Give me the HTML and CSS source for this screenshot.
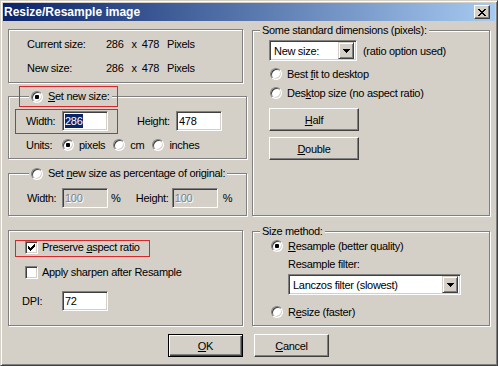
FILE: index.html
```html
<!DOCTYPE html>
<html lang="en">
<head>
    <meta charset="UTF-8">
    <title>Resize/Resample image</title>
    <link rel="stylesheet" href="styles.css">
</head>
<body>
    <div class="window">
        <!-- title bar -->
        <div class="titlebar">
            <span class="title">Resize/Resample image</span>
            <span class="close-btn">
                <svg width="8" height="7" viewBox="0 0 8 7"><path fill="#000" d="M0 0h2v1H0z M6 0h2v1H6z M1 1h2v1H1z M5 1h2v1H5z M2 2h4v1H2z M3 3h2v1H3z M2 4h4v1H2z M1 5h2v1H1z M5 5h2v1H5z M0 6h2v1H0z M6 6h2v1H6z"/></svg>
            </span>
        </div>

        <div class="dialog-body">
            <div class="columns">
                <!-- left column -->
                <div class="col col-left">
                    <fieldset class="group group-info">
                        <div class="info-row">
                            <span class="info-label">Current size:</span>
                            <span class="info-num">286</span><span class="info-x">x</span><span class="info-num">478</span><span>Pixels</span>
                        </div>
                        <div class="info-row">
                            <span class="info-label">New size:</span>
                            <span class="info-num">286</span><span class="info-x">x</span><span class="info-num">478</span><span>Pixels</span>
                        </div>
                    </fieldset>

                    <fieldset class="group group-new">
                        <legend class="legend legend-radio has-mark">
                            <span class="mark mark-legend"></span>
                            <span class="radio checked"></span><span><u>S</u>et new size:</span>
                        </legend>
                        <div class="group-body body-new">
                            <div class="row">
                                <span class="pair has-mark">
                                    <span class="mark mark-width"></span>
                                    <span class="lbl lbl-w">Width:</span>
                                    <span class="field"><span class="sel">286</span></span>
                                </span>
                                <span class="lbl lbl-h">Height:</span>
                                <span class="field">478</span>
                            </div>
                            <div class="row units">
                                <span class="lbl lbl-w">Units:</span>
                                <span class="opt"><span class="radio checked"></span><span>pixels</span></span>
                                <span class="opt"><span class="radio"></span><span>cm</span></span>
                                <span class="opt"><span class="radio"></span><span>inches</span></span>
                            </div>
                        </div>
                    </fieldset>

                    <fieldset class="group group-percent">
                        <legend class="legend legend-radio">
                            <span class="radio"></span><span>Set <u>n</u>ew size as percentage of original:</span>
                        </legend>
                        <div class="group-body body-percent">
                            <div class="row">
                                <span class="lbl lbl-w2">Width:</span>
                                <span class="field disabled">100</span>
                                <span class="pct">%</span>
                                <span class="lbl lbl-h2">Height:</span>
                                <span class="field disabled">100</span>
                                <span class="pct pct-last">%</span>
                            </div>
                        </div>
                    </fieldset>

                    <fieldset class="group group-opts">
                        <div class="group-body body-opts">
                            <div class="row row-check">
                                <span class="opt opt-check has-mark">
                                    <span class="mark mark-preserve"></span>
                                    <span class="check">
                                        <svg width="7" height="7" viewBox="0 0 7 7"><path fill="#000" d="M6 0h1v1H6z M5 1h2v1H5z M0 2h1v1H0z M4 2h3v1H4z M0 3h2v1H0z M3 3h3v1H3z M0 4h5v1H0z M1 5h3v1H1z M2 6h1v1H2z"/></svg>
                                    </span>
                                    <span>Preserve <u>a</u>spect ratio</span>
                                </span>
                            </div>
                            <div class="row row-check row-sharpen">
                                <span class="opt opt-check"><span class="check"></span><span>Apply sharpen after Resample</span></span>
                            </div>
                            <div class="row row-dpi">
                                <span class="lbl lbl-dpi">DPI:</span>
                                <span class="field">72</span>
                            </div>
                        </div>
                    </fieldset>
                </div>

                <!-- right column -->
                <div class="col col-right">
                    <fieldset class="group group-std">
                        <legend class="legend">Some standard dimensions (pixels):</legend>
                        <div class="group-body body-std">
                            <div class="row row-combo">
                                <span class="combo combo-size">
                                    <span class="combo-text">New size:</span>
                                    <span class="combo-btn">
                                        <svg width="7" height="4" viewBox="0 0 7 4"><path fill="#000" d="M0 0h7v1H0z M1 1h5v1H1z M2 2h3v1H2z M3 3h1v1H3z"/></svg>
                                    </span>
                                </span>
                                <span class="combo-note">(ratio option used)</span>
                            </div>
                            <div class="row row-radio"><span class="opt"><span class="radio"></span><span>Best <u>f</u>it to desktop</span></span></div>
                            <div class="row row-radio"><span class="opt"><span class="radio"></span><span>Des<u>k</u>top size (no aspect ratio)</span></span></div>
                            <span class="btn btn-wide btn-half"><span><u>H</u>alf</span></span>
                            <span class="btn btn-wide btn-double"><span><u>D</u>ouble</span></span>
                        </div>
                    </fieldset>

                    <fieldset class="group group-method">
                        <legend class="legend">Size method:</legend>
                        <div class="group-body body-method">
                            <div class="row row-resample"><span class="opt"><span class="radio checked"></span><span><u>R</u>esample (better quality)</span></span></div>
                            <div class="row row-filter">Resample filter:</div>
                            <span class="combo combo-filter">
                                <span class="combo-text">Lanczos filter (slowest)</span>
                                <span class="combo-btn">
                                    <svg width="7" height="4" viewBox="0 0 7 4"><path fill="#000" d="M0 0h7v1H0z M1 1h5v1H1z M2 2h3v1H2z M3 3h1v1H3z"/></svg>
                                </span>
                            </span>
                            <div class="row row-resize"><span class="opt"><span class="radio"></span><span>R<u>e</u>size (faster)</span></span></div>
                        </div>
                    </fieldset>
                </div>
            </div>

            <!-- OK / Cancel -->
            <div class="buttons">
                <span class="btn btn-default"><span><u>O</u>K</span></span>
                <span class="btn"><span><u>C</u>ancel</span></span>
            </div>
        </div>
    </div>
</body>
</html>
```

FILE: styles.css
```css
* {
    margin: 0;
    padding: 0;
    box-sizing: border-box;
}
body {
    font-family: 'Liberation Sans', Arial, sans-serif;
    font-size: 11px;
    letter-spacing: -0.3px;
    color: #000;
    background: #d4d0c8;
}
u {
    text-decoration: underline;
    text-underline-offset: 1px;
}
.window {
    width: 498px;
    height: 366px;
    background: #d4d0c8;
    border: 1px solid;
    border-color: #d4d0c8 #404040 #404040 #d4d0c8;
    box-shadow: inset 1px 1px #fff, inset -1px -1px #808080;
    padding: 2px;
}
.titlebar {
    height: 18px;
    display: flex;
    align-items: center;
    justify-content: space-between;
    padding: 0 5px 0 1px;
    background: linear-gradient(to right, #0a246a, #a6caf0);
}
.title {
    color: #fff;
    font-weight: bold;
    font-size: 12px;
    letter-spacing: 0;
}
.close-btn {
    width: 16px;
    height: 14px;
    display: flex;
    align-items: center;
    justify-content: center;
    background: #d4d0c8;
    border: 1px solid;
    border-color: #fff #404040 #404040 #fff;
    box-shadow: inset -1px -1px #808080;
}
.dialog-body {
    padding: 3px 0 0 5px;
}
.columns {
    display: flex;
    gap: 5px;
}
.col {
    display: flex;
    flex-direction: column;
}
.col-left {
    width: 239px;
}
.col-right {
    width: 238px;
}

/* group boxes */
.group {
    border: 1px solid #808080;
    box-shadow: inset 1px 1px #fff, 1px 1px #fff;
    min-width: 0;
    padding: 0;
}
.legend {
    height: 13px;
    line-height: 13px;
    padding: 0 2px;
    margin-left: 7px;
    background: #d4d0c8;
}
.legend-radio {
    display: flex;
    align-items: center;
    gap: 5px;
    margin-left: 20px;
}
.has-mark {
    position: relative;
}
.mark {
    position: absolute;
    border: 1px solid #d8262b;
    pointer-events: none;
}
.mark-legend {
    left: -10px;
    right: -6px;
    top: -4px;
    bottom: -4px;
}
.mark-width {
    left: -11px;
    right: -10px;
    top: 0;
    bottom: -1px;
}
.mark-preserve {
    left: -10px;
    right: -10px;
    top: -1px;
    bottom: -3px;
}

.row {
    display: flex;
    align-items: center;
}
.lbl {
    flex: none;
}
.pair {
    display: flex;
    align-items: center;
    height: 24px;
}

/* info */
.group-info {
    margin-top: 5px;
    width: 235px;
    height: 54px;
    padding: 2px 0 0 18px;
}
.info-row {
    height: 24px;
    display: flex;
    align-items: center;
}
.info-label {
    width: 79px;
}
.info-num {
    margin-right: 8px;
}
.info-x {
    margin-right: 5px;
}

/* set new size */
.group-new {
    margin-top: 7px;
    height: 69px;
}
.body-new {
    padding: 6px 0 0 17px;
}
.body-new .row {
    height: 24px;
}
.lbl-w {
    width: 36px;
}
.lbl-h {
    width: 39px;
    margin-left: 29px;
}
.units .opt + .opt {
    margin-left: 8px;
}

/* percentage */
.group-percent {
    margin-top: 8px;
    height: 49px;
}
.body-percent {
    padding: 6px 0 0 18px;
}
.body-percent .row {
    height: 24px;
}
.lbl-w2 {
    width: 35px;
}
.pct {
    width: 32px;
    padding-left: 3px;
}
.pct-last {
    padding-left: 5px;
}
.lbl-h2 {
    width: 36px;
}

/* options */
.group-opts {
    margin-top: 14px;
    width: 235px;
    height: 96px;
}
.body-opts {
    padding: 6px 0 0 13px;
}
.row-check {
    height: 20px;
    padding-left: 3px;
}
.row-sharpen {
    margin-top: 5px;
}
.row-dpi {
    margin-top: 9px;
    height: 20px;
}
.lbl-dpi {
    width: 40px;
}

/* right: standard dimensions */
.group-std {
    height: 192px;
}
.body-std {
    padding: 3px 0 0 16px;
    display: flex;
    flex-direction: column;
    align-items: flex-start;
}
.row-combo {
    height: 21px;
}
.combo-note {
    margin-left: 6px;
}
.row-radio {
    height: 19px;
    padding-left: 1px;
}
.body-std .row-combo + .row-radio {
    margin-top: 3px;
}
.btn-half {
    margin-top: 6px;
}
.btn-double {
    margin-top: 6px;
}

/* right: size method */
.group-method {
    margin-top: 9px;
    height: 101px;
}
.body-method {
    padding: 0 0 0 18px;
    display: flex;
    flex-direction: column;
    align-items: flex-start;
}
.row-resample {
    height: 16px;
}
.row-filter {
    height: 18px;
    margin-top: 1px;
    padding-left: 17px;
}
.combo-filter {
    margin: 1px 0 0 17px;
    width: 173px;
}
.row-resize {
    height: 18px;
    margin-top: 8px;
}

/* controls */
.opt {
    display: flex;
    align-items: center;
    gap: 5px;
}
.opt-check {
    gap: 4px;
}
.radio {
    flex: none;
    width: 12px;
    height: 12px;
    border-radius: 50%;
    background: #fff;
    border: 1px solid;
    border-color: #808080 #fff #fff #808080;
    box-shadow: inset 1px 1px #404040, inset -1px -1px #d4d0c8;
}
.radio.checked {
    background: radial-gradient(circle, #000 0 2px, #fff 2.5px);
}
.check {
    flex: none;
    width: 13px;
    height: 13px;
    display: flex;
    align-items: center;
    justify-content: center;
    background: #fff;
    border: 1px solid;
    border-color: #808080 #fff #fff #808080;
    box-shadow: inset 1px 1px #404040, inset -1px -1px #d4d0c8;
}
.field {
    flex: none;
    width: 46px;
    height: 20px;
    display: flex;
    align-items: center;
    padding-left: 2px;
    background: #fff;
    border: 1px solid;
    border-color: #808080 #fff #fff #808080;
    box-shadow: inset 1px 1px #404040, inset -1px -1px #d4d0c8;
}
.field.disabled {
    background: #d4d0c8;
    color: #808080;
    text-shadow: 1px 1px #fff;
}
.sel {
    background: #0a246a;
    color: #fff;
    line-height: 14px;
    padding-right: 1px;
}
.combo {
    flex: none;
    height: 21px;
    display: flex;
    align-items: center;
    padding: 2px;
    background: #fff;
    border: 1px solid;
    border-color: #808080 #fff #fff #808080;
    box-shadow: inset 1px 1px #404040, inset -1px -1px #d4d0c8;
}
.combo-size {
    width: 88px;
}
.combo-text {
    flex: 1;
    padding-left: 2px;
    white-space: nowrap;
}
.combo-btn {
    flex: none;
    width: 16px;
    height: 17px;
    display: flex;
    align-items: center;
    justify-content: center;
    background: #d4d0c8;
    border: 1px solid;
    border-color: #d4d0c8 #404040 #404040 #d4d0c8;
    box-shadow: inset 1px 1px #fff, inset -1px -1px #808080;
}
.btn {
    width: 75px;
    height: 23px;
    display: flex;
    align-items: center;
    justify-content: center;
    background: #d4d0c8;
    border: 1px solid;
    border-color: #fff #404040 #404040 #fff;
    box-shadow: inset -1px -1px #808080;
}
.btn-wide {
    width: 90px;
}
.btn-default {
    border-color: #000;
    box-shadow: inset 1px 1px #fff, inset -1px -1px #404040, inset -2px -2px #808080;
}
.buttons {
    display: flex;
    justify-content: center;
    gap: 11px;
    margin-top: 8px;
    padding-right: 6px;
}
```
